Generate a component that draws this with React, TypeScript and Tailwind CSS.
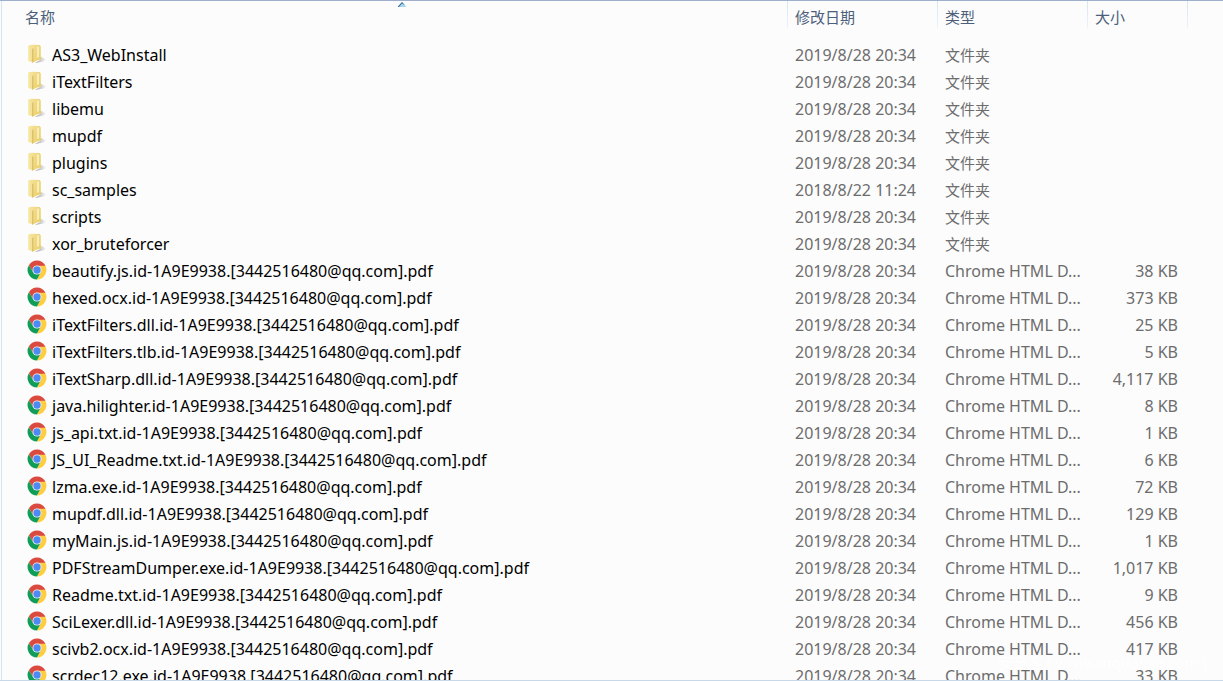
import { useId } from "react"

const DATE = "2019/8/28 20:34"

const folders = [
  { name: "AS3_WebInstall", date: DATE },
  { name: "iTextFilters", date: DATE },
  { name: "libemu", date: DATE },
  { name: "mupdf", date: DATE },
  { name: "plugins", date: DATE },
  { name: "sc_samples", date: "2018/8/22 11:24" },
  { name: "scripts", date: DATE },
  { name: "xor_bruteforcer", date: DATE },
]

const files = [
  { name: "beautify.js.id-1A9E9938.[3442516480@qq.com].pdf", size: "38 KB" },
  { name: "hexed.ocx.id-1A9E9938.[3442516480@qq.com].pdf", size: "373 KB" },
  { name: "iTextFilters.dll.id-1A9E9938.[3442516480@qq.com].pdf", size: "25 KB" },
  { name: "iTextFilters.tlb.id-1A9E9938.[3442516480@qq.com].pdf", size: "5 KB" },
  { name: "iTextSharp.dll.id-1A9E9938.[3442516480@qq.com].pdf", size: "4,117 KB" },
  { name: "java.hilighter.id-1A9E9938.[3442516480@qq.com].pdf", size: "8 KB" },
  { name: "js_api.txt.id-1A9E9938.[3442516480@qq.com].pdf", size: "1 KB" },
  { name: "JS_UI_Readme.txt.id-1A9E9938.[3442516480@qq.com].pdf", size: "6 KB" },
  { name: "lzma.exe.id-1A9E9938.[3442516480@qq.com].pdf", size: "72 KB" },
  { name: "mupdf.dll.id-1A9E9938.[3442516480@qq.com].pdf", size: "129 KB" },
  { name: "myMain.js.id-1A9E9938.[3442516480@qq.com].pdf", size: "1 KB" },
  { name: "PDFStreamDumper.exe.id-1A9E9938.[3442516480@qq.com].pdf", size: "1,017 KB" },
  { name: "Readme.txt.id-1A9E9938.[3442516480@qq.com].pdf", size: "9 KB" },
  { name: "SciLexer.dll.id-1A9E9938.[3442516480@qq.com].pdf", size: "456 KB" },
  { name: "scivb2.ocx.id-1A9E9938.[3442516480@qq.com].pdf", size: "417 KB" },
  { name: "scrdec12.exe.id-1A9E9938.[3442516480@qq.com].pdf", size: "33 KB" },
]

const rows = [
  ...folders.map((f) => ({ ...f, kind: "folder", type: "文件夹", size: "" })),
  ...files.map((f) => ({ ...f, kind: "chrome", type: "Chrome HTML D...", date: DATE })),
]

function FolderIcon() {
  const id = useId()
  return (
    <svg viewBox="0 0 20 20" className="mb-0.5 h-5 w-5 shrink-0" aria-hidden="true">
      <defs>
        <linearGradient id={`${id}b`} x1="0" x2="1" y1="0" y2="0">
          <stop offset="0" stopColor="#f7e8a2" />
          <stop offset="1" stopColor="#ecd27a" />
        </linearGradient>
        <linearGradient id={`${id}f`} x1="0" x2="1" y1="0" y2="1">
          <stop offset="0" stopColor="#f3de92" />
          <stop offset="1" stopColor="#ebcf62" />
        </linearGradient>
        <linearGradient id={`${id}s`} x1="0" x2="1" y1="0" y2="0">
          <stop offset="0" stopColor="#7a7a7a" stopOpacity="0.8" />
          <stop offset="1" stopColor="#aaaaaa" stopOpacity="0.1" />
        </linearGradient>
      </defs>
      {/* shadow, back flap, front panel, paper edge */}
      <path d="M13 12.5 L15.5 13.5 L19 15.6 L16.5 17.4 L8 19 L13 16Z" fill={`url(#${id}s)`} />
      <path d="M1.2 1.6 L4.6 0.8 L12.6 1 L13.2 1.6 L13.2 4 L6 6 L6 18.4 L1.2 17Z" fill={`url(#${id}b)`} />
      <path d="M5.4 5 L9.4 2 L13.8 2.2 L13.8 15.6 L10 16.4 L5.4 18.8Z" fill={`url(#${id}f)`} />
      <path d="M10 2.4 L12 2.4 L12 13 L10 14Z" fill="#f8edbd" />
      <path d="M5 5 L6.4 4.2 L6.4 18 L5 18.8Z" fill="#dcc06c" />
    </svg>
  )
}

function ChromeIcon() {
  return (
    <svg viewBox="0 0 48 48" className="mb-0.5 h-5 w-5 shrink-0" aria-hidden="true">
      <circle cx="24" cy="24" r="22.5" fill="#fff" />
      <path d="M4.5 12.75 A22.5 22.5 0 0 1 43.5 12.75 L24 13.5 L14.9 29.25Z" fill="#db4a3f" />
      <path d="M43.5 12.75 A22.5 22.5 0 0 1 24 46.5 L33.1 29.25 L24 13.5Z" fill="#ffcd40" />
      <path d="M24 46.5 A22.5 22.5 0 0 1 4.5 12.75 L14.9 29.25 L33.1 29.25Z" fill="#109d58" />
      <path d="M24 13.5 L43.9 13.5 L42.8 11.5 L24 12Z" fill="#db4a3f" />
      <circle cx="24" cy="24" r="10.8" fill="#f4f4f4" />
      <circle cx="24" cy="24" r="8.8" fill="#4c8bf5" />
    </svg>
  )
}

function ColumnHeader({ label, sorted = false }: { label: string; sorted?: boolean }) {
  return (
    <th
      scope="col"
      aria-sort={sorted ? "ascending" : undefined}
      className="relative h-10 p-0 text-left align-top font-normal"
    >
      <div className="flex h-[27px]">
        {!sorted && <span className="w-px bg-linear-to-b from-[#d9e5f3] to-[#ecf2f9]" />}
        <button
          type="button"
          className={`flex flex-1 items-center pt-1 text-[15px] leading-5 text-[#4c607a] ${sorted ? "pl-2" : "pl-[7px]"}`}
        >
          {label}
        </button>
      </div>
      {sorted && (
        <svg viewBox="0 0 9 5" className="absolute top-px left-1/2 h-[5px] w-[9px] -translate-x-1/2" aria-hidden="true">
          <path d="M0 5 L4.5 0 L9 5Z" fill="#a5d7ef" />
          <path d="M0 5 L4.5 0 L7.5 3.3 L4.5 1.5 L1.5 5Z" fill="#3f6f8f" />
        </svg>
      )}
    </th>
  )
}

export default function App() {
  return (
    <main className="relative h-screen overflow-hidden border-y border-t-[#9eaecb] border-b-[#c9d8e8] bg-[#fcfcfc] pl-px font-['Noto_Sans','Noto_Sans_CJK_SC',sans-serif] text-base leading-5">
      <div className="border-l border-[#d6e4f1] pl-[15px]">
        <table className="w-full table-fixed border-collapse whitespace-nowrap">
          <colgroup>
            <col />
            <col className="w-[150px]" />
            <col className="w-[150px]" />
            <col className="w-[100px]" />
            <col className="w-9" />
          </colgroup>
          <thead>
            <tr>
              <ColumnHeader label="名称" sorted />
              <ColumnHeader label="修改日期" />
              <ColumnHeader label="类型" />
              <ColumnHeader label="大小" />
              <td className="p-0 align-top">
                <div className="h-[27px] w-px bg-linear-to-b from-[#d9e5f3] to-[#ecf2f9]" />
              </td>
            </tr>
          </thead>
          <tbody className="text-[#6d6d6d]">
            {rows.map((row) => (
              <tr key={row.name} className="h-[27px]">
                <td className="p-0 pl-[10px]">
                  <div className="flex items-center gap-[5px] text-black">
                    {row.kind === "folder" ? <FolderIcon /> : <ChromeIcon />}
                    <span>{row.name}</span>
                  </div>
                </td>
                <td className="p-0 pl-2">{row.date}</td>
                <td className={row.kind === "folder" ? "p-0 pl-2 text-[15px]" : "p-0 pl-2"}>{row.type}</td>
                <td className="p-0 pr-[9px] text-right">{row.size}</td>
                <td className="p-0" />
              </tr>
            ))}
          </tbody>
        </table>
      </div>
      <p className="pointer-events-none absolute right-4 bottom-2 text-[15px] leading-5 text-white">
        安全客 ( www.anquanke.com )
      </p>
    </main>
  )
}
